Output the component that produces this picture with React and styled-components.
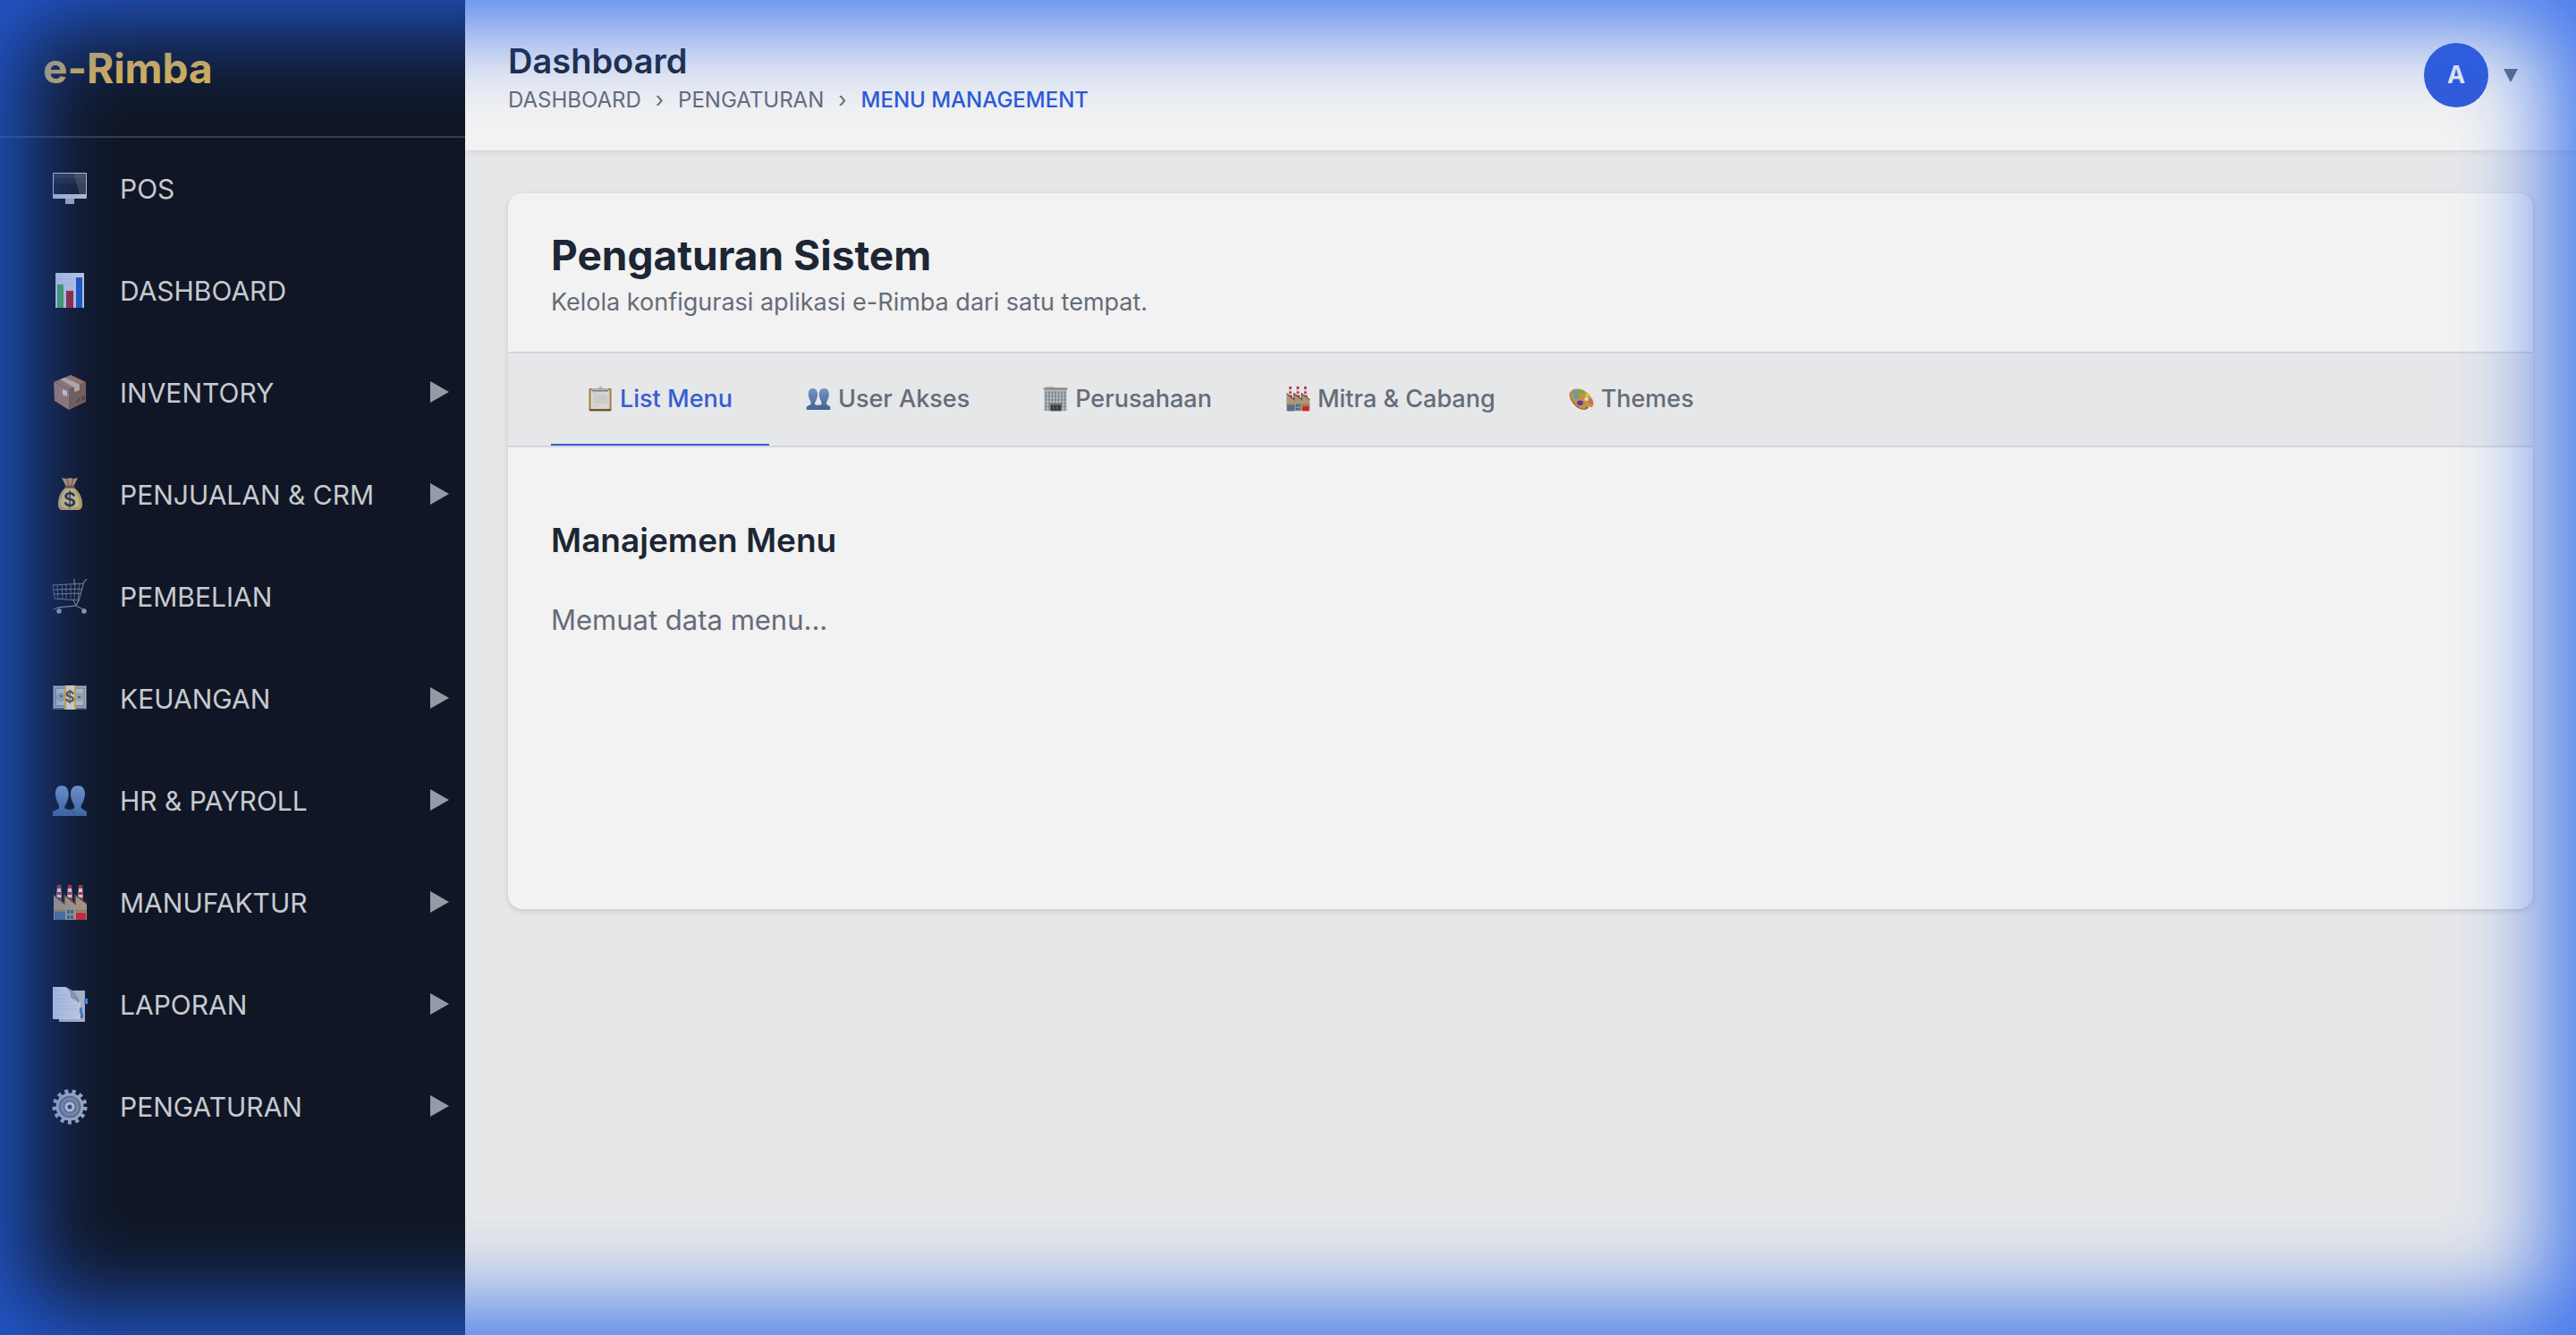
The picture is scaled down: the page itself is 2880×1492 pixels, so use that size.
import { useState } from 'react';
import styled, { createGlobalStyle } from 'styled-components';

const GlobalStyle = createGlobalStyle`
    * {
        box-sizing: border-box;
    }
    body {
        margin: 0;
        background: #f3f4f6;
        color: #1f2937;
        font-family: Inter, 'Liberation Sans', sans-serif;
    }
    h1, h2, h3, p {
        margin: 0;
    }
    button {
        font-family: inherit;
        border: none;
        background: none;
        padding: 0;
        cursor: pointer;
    }
    a {
        color: inherit;
        text-decoration: none;
    }
`

const Layout = styled.div`
    display: flex;
    min-height: 100vh;
`

/* blue glow round the whole window while the page is busy */
const Glow = styled.div`
    position: fixed;
    inset: 0;
    z-index: 10;
    pointer-events: none;
    background: rgba(0, 0, 0, 0.05);
    box-shadow: inset 0 0 100px 30px rgba(37, 99, 235, 0.86);
`

const Sidebar = styled.aside`
    width: 520px;
    flex-shrink: 0;
    background: #111827;
`

const Brand = styled.div`
    padding: 48px;
    border-bottom: 2px solid #374151;
    color: #ebbf52;
    font-size: 46px;
    line-height: 56px;
    font-weight: 700;
`

const Nav = styled.nav`
    display: flex;
    flex-direction: column;
`

const NavItem = styled.a`
    display: flex;
    align-items: center;
    width: 100%;
    height: 114px;
    padding: 0 18px 0 58px;
    color: #d1d5db;
    font-size: 30px;
    text-align: left;
`

const NavLabel = styled.span`
    flex: 1;
    margin-left: 36px;
`

const Main = styled.div`
    flex: 1;
    min-width: 0;
`

const Header = styled.header`
    display: flex;
    align-items: center;
    justify-content: space-between;
    padding: 40px 64px 40px 48px;
    background: #ffffff;
    box-shadow: 0 2px 6px rgba(0, 0, 0, 0.08);
`

const PageTitle = styled.h1`
    font-size: 38px;
    line-height: 56px;
    font-weight: 600;
`

const Breadcrumb = styled.nav`
    display: flex;
    gap: 16px;
    color: #6b7280;
    font-size: 24px;
    line-height: 32px;
`

const CurrentCrumb = styled.span`
    color: #2f5fe3;
    font-weight: 500;
`

const UserButton = styled.button`
    display: flex;
    align-items: center;
    gap: 16px;
`

const Avatar = styled.span`
    width: 72px;
    height: 72px;
    border-radius: 50%;
    background: #3460e4;
    color: #ffffff;
    font-size: 27px;
    line-height: 72px;
    font-weight: 700;
    text-align: center;
`

const Content = styled.main`
    padding: 48px;
`

const Card = styled.section`
    min-height: 800px;
    border-radius: 16px;
    background: #ffffff;
    box-shadow: 0 2px 6px rgba(0, 0, 0, 0.14);
`

const CardHeader = styled.div`
    padding: 37px 48px 35px;
    border-bottom: 2px solid #e0e2e7;
`

const CardTitle = styled.h2`
    font-size: 46px;
    line-height: 64px;
    font-weight: 700;
`

const CardText = styled.p`
    color: #6b7280;
    font-size: 27px;
    line-height: 41px;
`

const TabBar = styled.div`
    display: flex;
    padding: 0 48px;
    background: #f3f4f6;
    border-bottom: 2px solid #e0e2e7;
`

const Tab = styled.button`
    display: flex;
    align-items: center;
    gap: 8px;
    height: 103px;
    padding: 0 41px;
    border-bottom: 2px solid ${({ $active }) => ($active ? '#3a62e0' : 'transparent')};
    color: ${({ $active }) => ($active ? '#3a62e0' : '#6b7280')};
    font-size: 27px;
    font-weight: 500;
`

const TabPanel = styled.div`
    padding: 76px 48px;
`

const PanelTitle = styled.h3`
    margin-bottom: 36px;
    font-size: 37px;
    line-height: 56px;
    font-weight: 600;
`

const Loading = styled.p`
    color: #6b7280;
    font-size: 31px;
    line-height: 50px;
`

const drawings = {
    monitor: (
        <>
            <path d="M15 30h10v7H15z" fill="#a9afc4" />
            <rect x="1" y="2" width="38" height="29" rx="1" fill="#c3c8d8" />
            <rect x="2" y="3" width="36" height="23" fill="#1b2230" />
            <path d="M2 3h36v9H2z" fill="#343c4b" />
            <path d="M2 8h36v6H2z" fill="#272f3d" />
            <path d="M24 3h14v23h-7z" fill="#7b8088" opacity="0.35" />
        </>
    ),
    chart: (
        <>
            <rect x="4" y="0" width="32" height="39" fill="#c9d4ec" />
            <path d="M4 7h32M4 13h32M4 19h32M4 25h32M4 31h32" stroke="#b9c5e2" strokeWidth="0.6" />
            <rect x="6" y="13" width="7" height="26" fill="#4dab5c" />
            <rect x="16" y="20" width="8" height="19" fill="#a52b38" />
            <rect x="27" y="5" width="7" height="34" fill="#245cc4" />
        </>
    ),
    box: (
        <>
            <path d="M2 8l17 8v23L3 29z" fill="#ab8067" />
            <path d="M19 16L38 8v22L19 39z" fill="#836450" />
            <path d="M2 8L21 0l17 8-19 8z" fill="#a67d64" />
            <path d="M9 5l6-2 16 8v6l-6 2v-5z" fill="#cbb9ac" />
            <path d="M12 16l5 2v6l-5-2z" fill="#cfdae8" />
            <path d="M27 29l2 2 2-5M34 24v5M36 23v5" stroke="#48372f" strokeWidth="1" fill="none" />
        </>
    ),
    bag: (
        <>
            <path d="M11 1l5 1 4-1 4 1 5-1-5 10h-8z" fill="#c09a6c" />
            <path d="M16 11C9 17 7 23 7 31c0 4 2 6 5 6h16c4 0 6-2 6-6 0-8-3-14-10-20z" fill="#c4aa62" />
            <path d="M17 13c-6 6-8 14-7 20 7 3 14 2 20 0 1-6-1-14-6-20z" fill="#dcc87d" />
            <path d="M15 10h10v2H15zM17 2l2 7M24 2l-2 7" stroke="#745238" strokeWidth="1" fill="#8d633e" />
            <text x="20" y="33" textAnchor="middle" fontFamily="Inter, sans-serif" fontSize="22" fontWeight="600" fill="#303346">$</text>
        </>
    ),
    cart: (
        <g fill="none" stroke="#7d8393">
            <path d="M39 0l-3 3-6 21M1 7l34-2M2 12l32-1M2 17l30-1M3 22l28 2" strokeWidth="1.200" />
            <path d="M1 7l2 15M6 7l1 15M11 7l1 15M16 6v16M21 6v16M26 6l-1 17M31 5l-2 18" strokeWidth="0.800" />
            <path d="M24 24l3 6-20 2-5 2M30 24l-3 6 8 4M25 0v7" strokeWidth="1.300" />
            <circle cx="8" cy="36" r="1.500" stroke="#9ea3af" strokeWidth="2.500" />
            <circle cx="36" cy="36" r="1.500" stroke="#9ea3af" strokeWidth="2.500" />
        </g>
    ),
    cash: (
        <>
            <rect x="1" y="5" width="38" height="27" fill="#5d6573" />
            <rect x="2" y="6" width="36" height="24" fill="#c5cbc9" />
            <rect x="4" y="8" width="32" height="20" fill="none" stroke="#74807f" strokeWidth="1.200" />
            <circle cx="10" cy="18" r="5" fill="#a6afae" />
            <circle cx="31" cy="18" r="5" fill="#a3b4a9" />
            <path d="M9 17h3M29 18h3" stroke="#546e66" strokeWidth="2" />
            <rect x="14" y="5" width="13" height="27" fill="#d9b544" />
            <rect x="16" y="5" width="9" height="27" fill="#e8e2ca" />
            <text x="20" y="24" textAnchor="middle" fontFamily="Inter, sans-serif" fontSize="17" fontWeight="600" fill="#665333">$</text>
        </>
    ),
    users: (
        <>
            <defs>
                <linearGradient id="people" x1="0" y1="0" x2="0" y2="1">
                    <stop offset="0" stopColor="#7c9fce" />
                    <stop offset="1" stopColor="#46699a" />
                </linearGradient>
            </defs>
            <path d="M1 37v-5l6-3c2-1 1-3 0-6C2 14 3 3 11 3s10 11 5 20c-2 3-2 5-1 6l5 1 4-1c2-1 1-3 0-6-5-9-4-20 5-20s10 11 5 20c-2 3-2 5 0 6l5 3v5z" fill="url(#people)" />
            <path d="M20 30l4 2 2 4" stroke="#3e608c" fill="none" />
        </>
    ),
    factory: (
        <>
            <path d="M6 0h4l1 18H5zM18 0h4l1 18h-6zM30 0h4l1 18h-6z" fill="#e2dfe2" />
            <path d="M6 0h4v4H6zM6 8h4v3H6zM18 0h4v4h-4zM18 8h4v3h-4zM30 0h4v4h-4zM30 8h4v3h-4zM5 14h6v3H5zM17 14h6v3h-6zM29 14h6v3h-6z" fill="#cf2f3b" />
            <path d="M2 11l12 10V11l12 10V11l13 10v18H2z" fill="#b5a07e" />
            <path d="M2 11l12 10V11l12 10V11l13 10" fill="none" stroke="#61463d" strokeWidth="1.500" />
            <path d="M3 30h12v9H3z" fill="#4579a8" />
            <path d="M7 30v9M11 30v9M2 29h13M26 29h13" stroke="#8b7057" strokeWidth="1.200" />
            <path d="M17 28h3v4h-3zM21 28h3v4h-3zM17 34h3v4h-3zM21 34h3v4h-3z" fill="#356d9e" />
            <path d="M27 31h11v8H27z" fill="#d42c31" />
        </>
    ),
    report: (
        <>
            <path d="M8 4h29v35H8z" fill="#b8c0cd" />
            <path d="M32 29h3v6h-3z" fill="#6c747f" />
            <path d="M1 0h15l6 6 1 9 9 2v19H1z" fill="#d3d9e9" />
            <path d="M20 12c5 0 9 2 10 6 1-2 0-4-2-6z" fill="#777e87" />
            <path d="M15 0c4 2 6 5 6 12 4 0 7 1 9 3-1-6-6-12-15-15z" fill="#9aa1ac" />
            <path d="M3 4h6M3 9h14M3 13h15M3 17h16M3 21h25M3 25h25M3 31h9" stroke="#bcc5d8" strokeWidth="0.800" />
            <path d="M36 13h4v6h-4zM31 23h3v7h-3z" fill="#4b8ae3" />
        </>
    ),
    gear: (
        <>
            <circle cx="20" cy="20" r="17" fill="none" stroke="#a8b2c8" strokeWidth="5" strokeDasharray="4 4.215" />
            <circle cx="20" cy="20" r="15.500" fill="#a8b2c8" />
            <circle cx="20" cy="20" r="11.500" fill="#858ea2" stroke="#656e81" strokeWidth="1.500" />
            <circle cx="20" cy="20" r="8" fill="#6c7587" stroke="#949db0" strokeWidth="1" />
            <circle cx="20" cy="20" r="4" fill="#3d455a" stroke="#ccd3e1" strokeWidth="3" />
        </>
    ),
    clipboard: (
        <>
            <rect x="2" y="3" width="36" height="36" rx="2" fill="#ae8a4d" />
            <rect x="5" y="6" width="30" height="30" fill="#e3e2df" />
            <path d="M9 13h22v14H9z" fill="#d6d6d4" />
            <path d="M8 31h10M8 10h8" stroke="#cbcbc9" />
            <path d="M7 3h10l2-3h3l2 3h9v4H7z" fill="#b5bbbd" />
            <path d="M7 7h26" stroke="#667074" strokeWidth="1.500" />
            <path d="M3 36h34v3H3z" fill="#765123" />
        </>
    ),
    building: (
        <>
            <path d="M5 0h13v4H5z" fill="#c5c4bf" />
            <path d="M2 4h36v35H2z" fill="#c2c0ba" />
            <path d="M1 2h38v3H1z" fill="#8e8981" />
            <path d="M5 8v30M10 8v30M15 8v20M20 8v20M25 8v20M30 8v30M35 8v30" stroke="#6687a1" strokeWidth="2.500" strokeDasharray="4 1.500" />
            <path d="M12 29h17v10H12z" fill="#344249" />
            <path d="M11 27h19v3H11z" fill="#77706b" />
            <path d="M17 31v8M23 31v8" stroke="#798d94" />
        </>
    ),
    palette: (
        <>
            <path d="M1 10C0 22 12 38 26 37l6-3L4 8z" fill="#95642b" />
            <path d="M2 9C6 1 20 2 29 10c9 8 13 17 9 22-3 3-6-1-9-1s0 5-5 5C12 34 0 19 2 9z" fill="#cd9a4a" />
            <ellipse cx="10" cy="9" rx="4" ry="3" fill="#4aa8d8" />
            <ellipse cx="20" cy="8" rx="5" ry="3" fill="#70b949" />
            <ellipse cx="30" cy="14" rx="4" ry="3" fill="#e3cb4c" />
            <ellipse cx="12" cy="16" rx="4" ry="3" fill="#4aa8d8" />
            <ellipse cx="18" cy="26" rx="5" ry="4" fill="#6a36ad" />
            <ellipse cx="35" cy="24" rx="3" ry="4" fill="#e0705a" />
            <ellipse cx="28" cy="20" rx="3" ry="3" fill="#eeeae1" />
        </>
    ),
}

function Icon({ name, size }) {
    return (
        <svg width={size} height={size} viewBox="0 0 40 40" aria-hidden="true">
            {drawings[name]}
        </svg>
    )
}

const menus = [
    { label: 'POS', icon: 'monitor' },
    { label: 'DASHBOARD', icon: 'chart' },
    { label: 'INVENTORY', icon: 'box', sub: true },
    { label: 'PENJUALAN & CRM', icon: 'bag', sub: true },
    { label: 'PEMBELIAN', icon: 'cart' },
    { label: 'KEUANGAN', icon: 'cash', sub: true },
    { label: 'HR & PAYROLL', icon: 'users', sub: true },
    { label: 'MANUFAKTUR', icon: 'factory', sub: true },
    { label: 'LAPORAN', icon: 'report', sub: true },
    { label: 'PENGATURAN', icon: 'gear', sub: true },
]

const tabs = [
    { label: 'List Menu', icon: 'clipboard' },
    { label: 'User Akses', icon: 'users' },
    { label: 'Perusahaan', icon: 'building' },
    { label: 'Mitra & Cabang', icon: 'factory' },
    { label: 'Themes', icon: 'palette' },
]

export default function App() {
    const [activeTab, setActiveTab] = useState('List Menu');

    return (
        <Layout>
            <GlobalStyle />
            <Sidebar>
                <Brand>e-Rimba</Brand>
                <Nav>
                    {menus.map(menu => (
                        <NavItem
                            key={menu.label}
                            as={menu.sub ? 'button' : 'a'}
                            href={menu.sub ? undefined : '#'}
                        >
                            <Icon name={menu.icon} size={40} />
                            <NavLabel>{menu.label}</NavLabel>
                            {menu.sub && (
                                <svg width="22" height="26" viewBox="0 0 22 26" aria-hidden="true">
                                    <path d="M1 0l21 12L1 24z" fill="#9ca3af" />
                                </svg>
                            )}
                        </NavItem>
                    ))}
                </Nav>
            </Sidebar>
            <Main>
                <Header>
                    <div>
                        <PageTitle>Dashboard</PageTitle>
                        <Breadcrumb>
                            <a href="#">DASHBOARD</a>
                            <span>›</span>
                            <a href="#">PENGATURAN</a>
                            <span>›</span>
                            <CurrentCrumb>MENU MANAGEMENT</CurrentCrumb>
                        </Breadcrumb>
                    </div>
                    <UserButton>
                        <Avatar>A</Avatar>
                        <svg width="18" height="16" viewBox="0 0 18 16" aria-hidden="true">
                            <path d="M1 1h16L9 16z" fill="#6b7280" />
                        </svg>
                    </UserButton>
                </Header>
                <Content>
                    <Card>
                        <CardHeader>
                            <CardTitle>Pengaturan Sistem</CardTitle>
                            <CardText>Kelola konfigurasi aplikasi e-Rimba dari satu tempat.</CardText>
                        </CardHeader>
                        <TabBar role="tablist">
                            {tabs.map(tab => (
                                <Tab
                                    key={tab.label}
                                    role="tab"
                                    aria-selected={tab.label === activeTab}
                                    $active={tab.label === activeTab}
                                    onClick={() => setActiveTab(tab.label)}
                                >
                                    <Icon name={tab.icon} size={28} />
                                    {tab.label}
                                </Tab>
                            ))}
                        </TabBar>
                        <TabPanel role="tabpanel">
                            <PanelTitle>Manajemen Menu</PanelTitle>
                            <Loading>Memuat data menu...</Loading>
                        </TabPanel>
                    </Card>
                </Content>
            </Main>
            <Glow />
        </Layout>
    )
}
